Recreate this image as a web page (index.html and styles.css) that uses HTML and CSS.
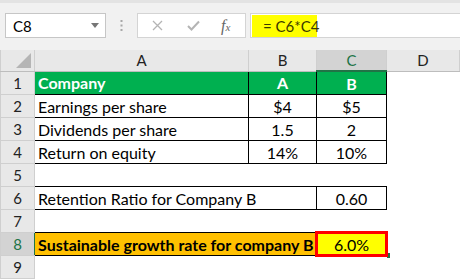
FILE: index.html
```html
<!DOCTYPE html>
<html lang="en">
<head>
    <meta charset="UTF-8">
    <meta name="viewport" content="width=device-width, initial-scale=1.0">
    <title>Sustainable Growth Rate</title>
    <link rel="stylesheet" href="styles.css">
</head>
<body>
    <div class="top-strip"></div>
    <div class="formula-bar">
        <div class="name-box">
            <span>C8</span>
            <svg class="drop" width="8" height="5" viewBox="0 0 8 5"><path d="M0 0H8L4 5Z" fill="#767676"/></svg>
        </div>
        <div class="grip">
            <svg width="3" height="11" viewBox="0 0 3 11"><rect x="0.5" y="0" width="2" height="2" fill="#a8a8a8"/><rect x="0.5" y="4.5" width="2" height="2" fill="#a8a8a8"/><rect x="0.5" y="9" width="2" height="2" fill="#a8a8a8"/></svg>
        </div>
        <div class="fx-buttons">
            <svg class="btn-icon" width="11" height="11" viewBox="0 0 11 11"><path d="M1 1L10 10M10 1L1 10" stroke="#b4b4b4" stroke-width="1.3" fill="none"/></svg>
            <svg class="btn-icon" width="13" height="11" viewBox="0 0 13 11"><path d="M1 6L4.5 9.5L12 1.5" stroke="#b4b4b4" stroke-width="2" fill="none"/></svg>
            <span class="fx">f<sub>x</sub></span>
        </div>
        <div class="formula-input">
            <span class="formula">= C6*C4</span>
        </div>
    </div>
    <table class="sheet">
        <colgroup>
            <col class="c-head">
            <col class="c-a">
            <col class="c-b">
            <col class="c-c">
            <col>
        </colgroup>
        <tr class="col-heads">
            <th class="corner"><span class="tri"></span></th>
            <th>A</th>
            <th>B</th>
            <th class="active">C</th>
            <th>D</th>
        </tr>
        <tr>
            <th class="row-head">1</th>
            <td class="box green bold">Company</td>
            <td class="box green bold mid">A</td>
            <td class="box green bold mid">B</td>
            <td></td>
        </tr>
        <tr>
            <th class="row-head">2</th>
            <td class="box">Earnings per share</td>
            <td class="box mid">$4</td>
            <td class="box mid">$5</td>
            <td></td>
        </tr>
        <tr>
            <th class="row-head">3</th>
            <td class="box">Dividends per share</td>
            <td class="box mid">1.5</td>
            <td class="box mid">2</td>
            <td></td>
        </tr>
        <tr>
            <th class="row-head">4</th>
            <td class="box">Return on equity</td>
            <td class="box mid">14%</td>
            <td class="box mid">10%</td>
            <td></td>
        </tr>
        <tr>
            <th class="row-head">5</th>
            <td></td><td></td><td></td><td></td>
        </tr>
        <tr>
            <th class="row-head">6</th>
            <td class="box" colspan="2">Retention Ratio for Company B</td>
            <td class="box mid">0.60</td>
            <td></td>
        </tr>
        <tr>
            <th class="row-head">7</th>
            <td></td><td></td><td></td><td></td>
        </tr>
        <tr>
            <th class="row-head active">8</th>
            <td class="box orange bold" colspan="2">Sustainable growth rate for company B</td>
            <td class="box yellow mid selected">6.0%</td>
            <td></td>
        </tr>
        <tr>
            <th class="row-head">9</th>
            <td></td><td></td><td></td><td></td>
        </tr>
    </table>
</body>
</html>
```

FILE: styles.css
```css
body {
    margin: 0;
    width: 460px;
    height: 280px;
    overflow: hidden;
    font-family: Lato, "Open Sans", sans-serif;
    background: #fff;
    color: #000;
}
.top-strip {
    height: 3px;
    background: #e3e3e3;
}
.formula-bar {
    display: flex;
    align-items: flex-start;
    height: 37px;
    padding: 10px 0 0 5px;
    background: #f1f1f1;
}
.name-box {
    display: flex;
    align-items: center;
    justify-content: space-between;
    box-sizing: border-box;
    width: 101px;
    height: 25px;
    padding: 0 6px 0 7px;
    background: #fff;
    border: 1px solid #c6c6c6;
    font-size: 15px;
}
.grip {
    display: flex;
    align-items: center;
    justify-content: center;
    width: 31px;
    height: 25px;
}
.fx-buttons {
    display: flex;
    align-items: center;
    box-sizing: border-box;
    width: 109px;
    height: 25px;
    padding-left: 14px;
    background: #fff;
    border: 1px solid #d4d4d4;
}
.btn-icon {
    margin-right: 24px;
}
.fx {
    font-family: "Liberation Serif", serif;
    font-style: italic;
    font-size: 16px;
    color: #666;
    margin-left: -3px;
}
.fx sub {
    font-size: 11px;
    vertical-align: 0;
}
.formula-input {
    flex: 1;
    box-sizing: border-box;
    height: 25px;
    margin-left: 4px;
    padding: 1px 0 0 1px;
    background: #fff;
    border: 1px solid #d4d4d4;
    border-right: none;
}
.formula {
    display: inline-block;
    box-sizing: border-box;
    width: 65px;
    height: 22px;
    line-height: 22px;
    padding-left: 11px;
    background: #ffff00;
    font-size: 15px;
    color: #3a3a00;
    white-space: nowrap;
}
.sheet {
    width: 460px;
    table-layout: fixed;
    border-collapse: collapse;
    font-size: 16px;
}
.c-head { width: 34px; }
.c-a { width: 214px; }
.c-b { width: 68px; }
.c-c { width: 70px; }
.sheet th {
    font-weight: normal;
    background: #e8e8e8;
    color: #222;
    border: 1px solid #cfcfcf;
    padding: 0;
}
.col-heads th {
    height: 20px;
    border-top: none;
    border-bottom: 1px solid #bdbdbd;
    font-size: 15px;
}
.col-heads th.active {
    background: #d3d3d3;
    color: #217346;
    border-bottom: 2px solid #217346;
}
.corner {
    position: relative;
}
.tri {
    position: absolute;
    right: 3px;
    bottom: 3px;
    width: 0;
    height: 0;
    border-left: 15px solid transparent;
    border-bottom: 15px solid #b5b5b5;
}
.row-head {
    height: 22px;
    font-size: 15px;
    border-left: none;
    border-right: 1px solid #ababab;
}
.row-head.active {
    background: #d3d3d3;
    color: #217346;
    border-right: 1px solid #217346;
}
.sheet td {
    height: 22px;
    padding: 0 3px;
    white-space: nowrap;
    overflow: visible;
}
.box {
    border: 1px solid #000;
}
.mid {
    text-align: center;
}
.bold {
    font-weight: bold;
}
.green {
    background: #00b050;
    color: #fff;
}
.orange {
    background: #ffc000;
}
.yellow {
    background: #ffff00;
}
.selected {
    position: relative;
}
.selected::after {
    content: "";
    position: absolute;
    left: -2px;
    top: -2px;
    right: -2px;
    bottom: -2px;
    border: 3px solid #ff0000;
}
.selected::before {
    content: "";
    position: absolute;
    right: -4px;
    bottom: -3px;
    width: 3px;
    height: 5px;
    background: #217346;
}
```
